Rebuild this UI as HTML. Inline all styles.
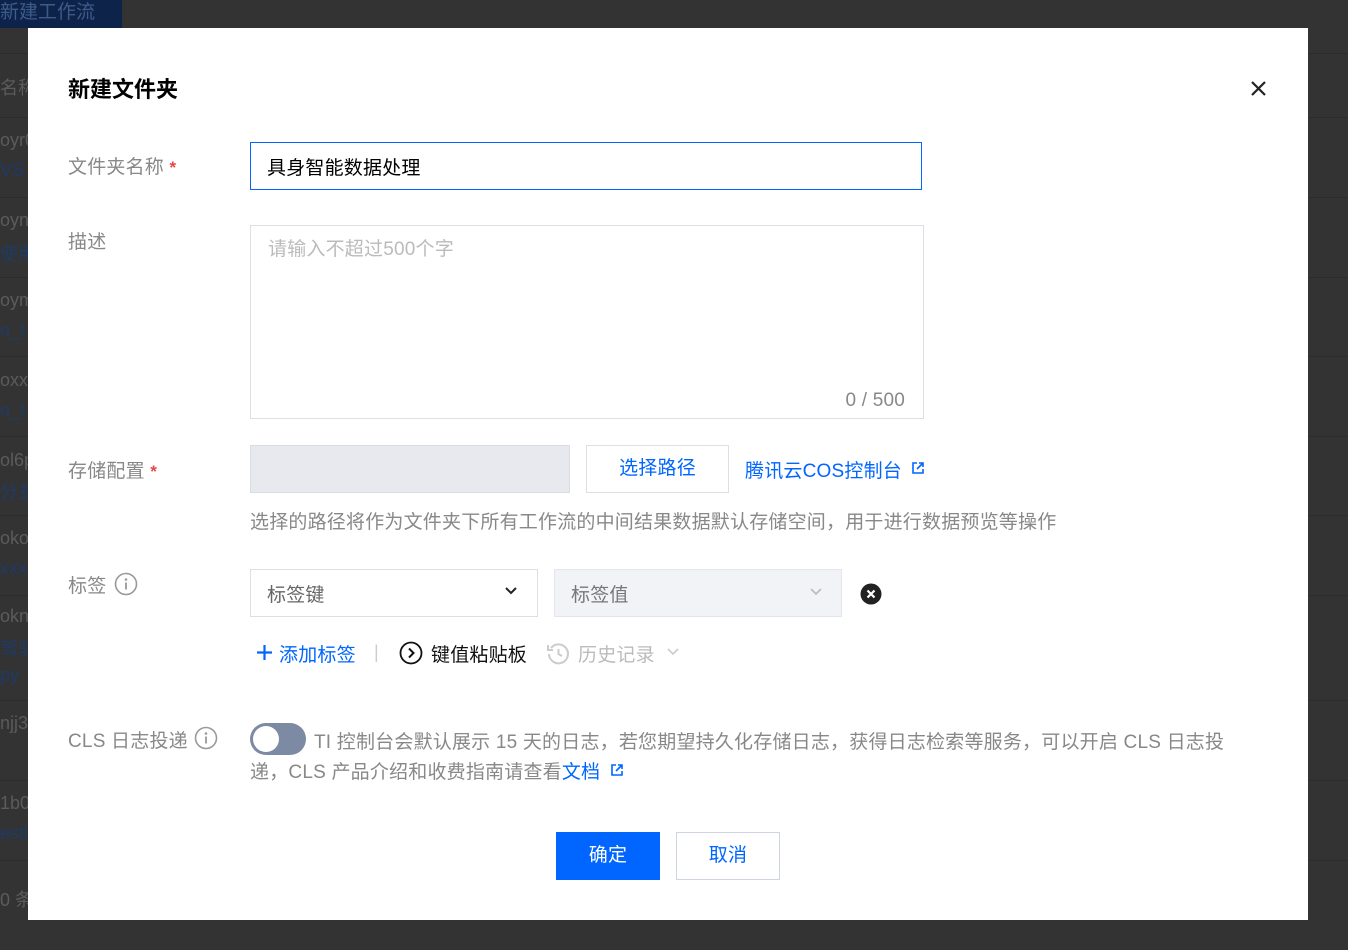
<!DOCTYPE html>
<html><head><meta charset="utf-8"><style>
*{margin:0;padding:0;box-sizing:border-box}
body{width:1348px;height:950px;background:#333;position:relative;overflow:hidden;font-family:"Liberation Sans","Noto Sans CJK SC",sans-serif}
.a{position:absolute}
.t{font-size:19px;letter-spacing:0.2px;white-space:nowrap}
.bg{color:#5b5b5b;font-size:18px;left:0;white-space:nowrap}
.bgb{color:#1f3a66;font-size:18px;left:0;white-space:nowrap}
.ln{left:0;width:1348px;height:1px;background:#2c2c2c}
.dlg{left:28px;top:28px;width:1280px;height:892px;background:#fff}
.lbl{color:#888;left:68px}
.star{color:#e54545;font-size:17px;font-weight:bold}
.inp{border:1px solid #dcdfe6}
.blue{color:#0066ff}
</style></head><body>
<div class="a" style="left:0;top:0;width:122px;height:28px;background:#0e2349;color:#3d5b8a;font-size:19px;line-height:26px;white-space:nowrap">新建工作流</div>
<div class="a ln" style="top:53px"></div>
<div class="a ln" style="top:117px"></div>
<div class="a ln" style="top:197px"></div>
<div class="a ln" style="top:277px"></div>
<div class="a ln" style="top:356px"></div>
<div class="a ln" style="top:436px"></div>
<div class="a ln" style="top:515px"></div>
<div class="a ln" style="top:595px"></div>
<div class="a ln" style="top:700px"></div>
<div class="a ln" style="top:780px"></div>
<div class="a ln" style="top:860px"></div>
<div class="a bg" style="top:74px">名称</div>
<div class="a bg" style="top:130px">oyr0</div><div class="a bgb" style="top:160px">VS</div>
<div class="a bg" style="top:210px">oyn</div><div class="a bgb" style="top:240px">使用</div>
<div class="a bg" style="top:290px">oym</div><div class="a bgb" style="top:320px">o_t</div>
<div class="a bg" style="top:370px">oxx1</div><div class="a bgb" style="top:400px">o_t</div>
<div class="a bg" style="top:450px">ol6p</div><div class="a bgb" style="top:478px">分身</div>
<div class="a bg" style="top:528px">oko</div><div class="a bgb" style="top:558px">xxx</div>
<div class="a bg" style="top:606px">okn</div><div class="a bgb" style="top:635px">驾驶</div><div class="a bgb" style="top:665px">py</div>
<div class="a bg" style="top:713px">njj3</div>
<div class="a bg" style="top:793px">1b0</div><div class="a bgb" style="top:823px">estl</div>
<div class="a bg" style="top:886px">0 条</div>

<div class="a dlg"></div>
<div class="a" style="left:68px;top:72px;font-size:22px;font-weight:bold;color:#000;white-space:nowrap">新建文件夹</div>
<svg class="a" style="left:1250px;top:80px" width="17" height="17" viewBox="0 0 17 17"><path d="M2 2L15 15M15 2L2 15" stroke="#222" stroke-width="2.2"/></svg>

<div class="a t lbl" style="top:152px">文件夹名称 <span class="star">*</span></div>
<div class="a t" style="left:250px;top:142px;width:672px;height:48px;border:1px solid #0066ff;color:#000;padding:10px 16px">具身智能数据处理</div>

<div class="a t lbl" style="top:227px">描述</div>
<div class="a t inp" style="left:250px;top:225px;width:674px;height:194px;color:#bbb;padding:8px 17px">请输入不超过500个字</div>
<div class="a t" style="right:443px;top:390px;color:#888">0 / 500</div>

<div class="a t lbl" style="top:456px">存储配置 <span class="star">*</span></div>
<div class="a" style="left:250px;top:445px;width:320px;height:48px;background:#e7e9ee;border:1px solid #d8dce3"></div>
<div class="a t inp" style="left:586px;top:445px;width:143px;height:48px;color:#0066ff;text-align:center;line-height:46px">选择路径</div>
<div class="a t blue" style="left:745px;top:456px">腾讯云COS控制台</div>
<svg class="a" style="left:911px;top:461px" width="14" height="14" viewBox="0 0 14 14"><path d="M6 2H2V12H12V8M8 2H12V6M12 2L6 8" stroke="#0066ff" stroke-width="1.6" fill="none"/></svg>
<div class="a t" style="left:250px;top:507px;color:#888">选择的路径将作为文件夹下所有工作流的中间结果数据默认存储空间，用于进行数据预览等操作</div>

<div class="a t lbl" style="top:571px">标签</div>
<svg class="a" style="left:114px;top:572px" width="24" height="24" viewBox="0 0 24 24"><circle cx="12" cy="12" r="10.5" stroke="#999" stroke-width="1.6" fill="none"/><circle cx="12" cy="7.5" r="1.3" fill="#999"/><path d="M12 10.5V17.5" stroke="#999" stroke-width="1.8"/></svg>
<div class="a t inp" style="left:250px;top:569px;width:288px;height:48px;color:#666;padding:10px 16px">标签键</div>
<svg class="a" style="left:504px;top:586px" width="14" height="10" viewBox="0 0 14 10"><path d="M2 2L7 7L12 2" stroke="#222" stroke-width="2" fill="none"/></svg>
<div class="a t" style="left:554px;top:569px;width:288px;height:48px;background:#f2f3f7;border:1px solid #e3e6ec;color:#777;padding:10px 16px">标签值</div>
<svg class="a" style="left:809px;top:587px" width="14" height="10" viewBox="0 0 14 10"><path d="M2 2L7 7L12 2" stroke="#bbb" stroke-width="1.6" fill="none"/></svg>
<svg class="a" style="left:860px;top:583px" width="22" height="22" viewBox="0 0 22 22"><circle cx="11" cy="11" r="10.5" fill="#222"/><path d="M7.5 7.5L14.5 14.5M14.5 7.5L7.5 14.5" stroke="#fff" stroke-width="2.2"/></svg>

<svg class="a" style="left:256px;top:644px" width="17" height="17" viewBox="0 0 17 17"><path d="M8.5 1V16M1 8.5H16" stroke="#0066ff" stroke-width="2.2"/></svg>
<div class="a t blue" style="left:279px;top:640px">添加标签</div>
<div class="a" style="left:374px;top:642px;color:#ccc;font-size:18px">|</div>
<svg class="a" style="left:399px;top:641px" width="24" height="24" viewBox="0 0 24 24"><circle cx="12" cy="12" r="10.5" stroke="#111" stroke-width="1.8" fill="none"/><path d="M10 7.5L14.5 12L10 16.5" stroke="#111" stroke-width="2" fill="none"/></svg>
<div class="a t" style="left:431px;top:640px;color:#111">键值粘贴板</div>
<svg class="a" style="left:546px;top:641px" width="25" height="25" viewBox="0 0 25 25"><path d="M5 7A9.5 9.5 0 1 1 3 13" stroke="#ccc" stroke-width="2" fill="none"/><path d="M2 4V9H7" stroke="#ccc" stroke-width="2" fill="none"/><path d="M12.5 8V13L16 15" stroke="#ccc" stroke-width="2" fill="none"/></svg>
<div class="a t" style="left:578px;top:640px;color:#bbb">历史记录</div>
<svg class="a" style="left:666px;top:647px" width="14" height="10" viewBox="0 0 14 10"><path d="M2 2L7 7L12 2" stroke="#ccc" stroke-width="1.6" fill="none"/></svg>

<div class="a t lbl" style="top:726px">CLS 日志投递</div>
<svg class="a" style="left:194px;top:726px" width="24" height="24" viewBox="0 0 24 24"><circle cx="12" cy="12" r="10.5" stroke="#999" stroke-width="1.6" fill="none"/><circle cx="12" cy="7.5" r="1.3" fill="#999"/><path d="M12 10.5V17.5" stroke="#999" stroke-width="1.8"/></svg>
<div class="a" style="left:250px;top:723px;width:56px;height:32px;border-radius:16px;background:#7d8aa3"></div>
<div class="a" style="left:253px;top:726px;width:26px;height:26px;border-radius:13px;background:#fff"></div>
<div class="a t" style="left:314px;top:727px;color:#888">TI 控制台会默认展示 15 天的日志，若您期望持久化存储日志，获得日志检索等服务，可以开启 CLS 日志投</div>
<div class="a t" style="left:250px;top:757px;color:#888">递，CLS 产品介绍和收费指南请查看<span class="blue">文档</span></div>
<svg class="a" style="left:610px;top:763px" width="14" height="14" viewBox="0 0 14 14"><path d="M6 2H2V12H12V8M8 2H12V6M12 2L6 8" stroke="#0066ff" stroke-width="1.6" fill="none"/></svg>

<div class="a t" style="left:556px;top:832px;width:104px;height:48px;background:#0066ff;color:#fff;text-align:center;line-height:48px">确定</div>
<div class="a t" style="left:676px;top:832px;width:104px;height:48px;border:1px solid #cfd5e0;color:#0066ff;text-align:center;line-height:46px">取消</div>
</body></html>
